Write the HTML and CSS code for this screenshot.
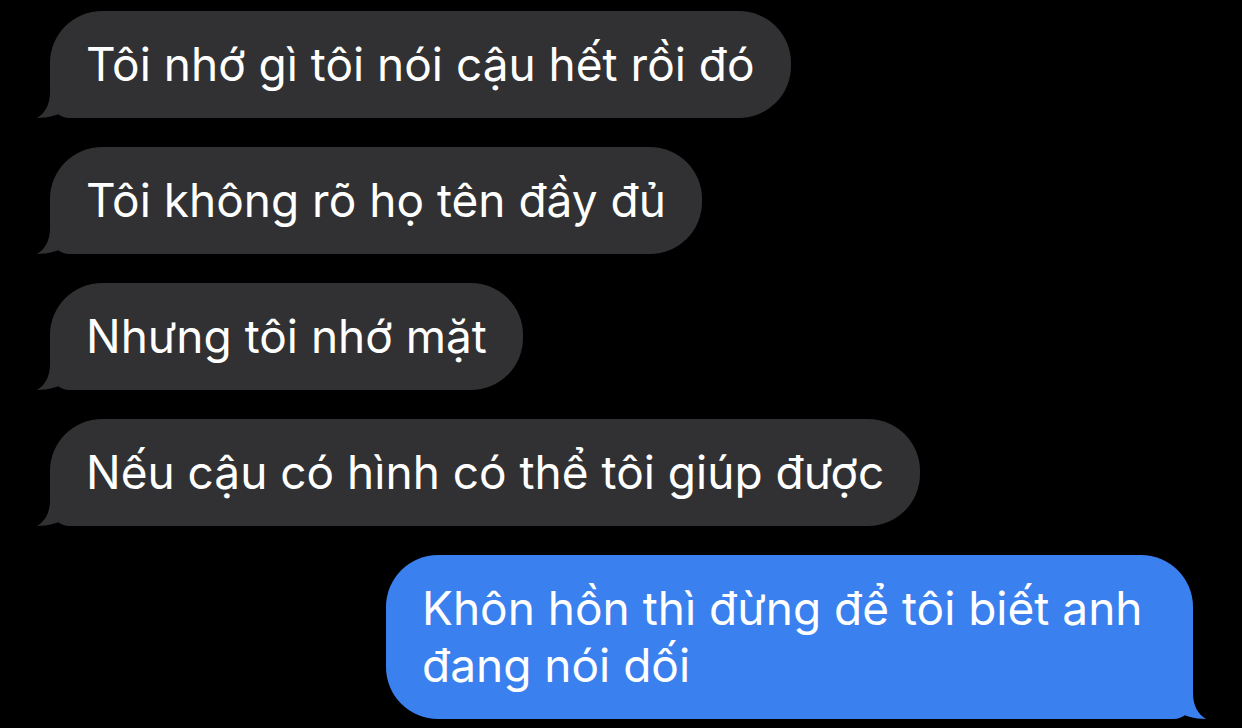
FILE: index.html
```html
<!DOCTYPE html>
<html lang="vi">
<head>
<meta charset="utf-8">
<title>Tin nhắn</title>
<link rel="stylesheet" href="styles.css">
</head>
<body>
<main class="thread">
  <div class="bubble in">Tôi nhớ gì tôi nói cậu hết rồi đó<svg class="tail" viewBox="0 0 50 40" width="50" height="40"><path d="M14,0 L14,14 C14,27 9,35 1,40 C12,40 24,37 32,31 C36,36 42,39 50,40 L50,0 Z"/></svg></div>
  <div class="bubble in">Tôi không rõ họ tên đầy đủ<svg class="tail" viewBox="0 0 50 40" width="50" height="40"><path d="M14,0 L14,14 C14,27 9,35 1,40 C12,40 24,37 32,31 C36,36 42,39 50,40 L50,0 Z"/></svg></div>
  <div class="bubble in">Nhưng tôi nhớ mặt<svg class="tail" viewBox="0 0 50 40" width="50" height="40"><path d="M14,0 L14,14 C14,27 9,35 1,40 C12,40 24,37 32,31 C36,36 42,39 50,40 L50,0 Z"/></svg></div>
  <div class="bubble in">Nếu cậu có hình có thể tôi giúp được<svg class="tail" viewBox="0 0 50 40" width="50" height="40"><path d="M14,0 L14,14 C14,27 9,35 1,40 C12,40 24,37 32,31 C36,36 42,39 50,40 L50,0 Z"/></svg></div>
  <div class="bubble out">Khôn hồn thì đừng để tôi biết anh đang nói dối<svg class="tail" viewBox="0 0 50 40" width="50" height="40"><path d="M36,0 L36,14 C36,27 41,35 49,40 C38,40 26,37 18,31 C14,36 8,39 0,40 L0,0 Z"/></svg></div>
</main>
</body>
</html>
```
FILE: styles.css
```css
html, body {
  margin: 0;
  padding: 0;
  background: #000;
}
body {
  width: 1242px;
  height: 728px;
  overflow: hidden;
  font-family: Inter, "Noto Sans", sans-serif;
}
.thread {
  display: flex;
  flex-direction: column;
  gap: 29px;
  padding: 11px 49px 0 50px;
}
.bubble {
  position: relative;
  box-sizing: border-box;
  padding: 25px 36px;
  font-size: 46px;
  line-height: 57px;
  color: #fff;
  border-radius: 52px;
}
.bubble.in {
  align-self: flex-start;
  background: #313133;
  border-bottom-left-radius: 20px;
}
.bubble.out {
  align-self: flex-end;
  max-width: 807px;
  background: #3b80ef;
  border-bottom-right-radius: 20px;
}
.tail {
  position: absolute;
  bottom: 0;
  display: block;
}
.in .tail {
  left: -14px;
  fill: #313133;
}
.out .tail {
  right: -14px;
  fill: #3b80ef;
}
```
